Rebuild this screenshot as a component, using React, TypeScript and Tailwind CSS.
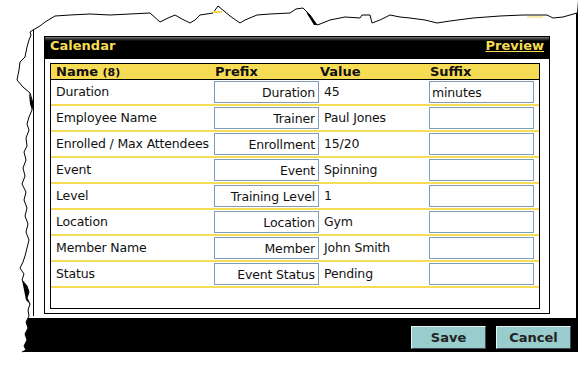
import React from 'react';

const rows = [
  ['Duration', 'Duration', '45', 'minutes'],
  ['Employee Name', 'Trainer', 'Paul Jones', ''],
  ['Enrolled / Max Attendees', 'Enrollment', '15/20', ''],
  ['Event', 'Event', 'Spinning', ''],
  ['Level', 'Training Level', '1', ''],
  ['Location', 'Location', 'Gym', ''],
  ['Member Name', 'Member', 'John Smith', ''],
  ['Status', 'Event Status', 'Pending', ''],
];

const topEdge: [number, number][] = [
  [577, 13], [563, 17], [553, 18], [547, 15], [523, 15], [500, 16], [473, 18], [450, 21], [437, 23],
  [425, 20], [410, 18], [400, 17], [390, 15], [380, 20], [372, 23], [370, 15], [362, 15], [360, 18],
  [345, 17], [330, 20], [320, 24], [317, 25], [310, 15], [303, 8], [296, 9], [290, 13], [270, 14],
  [257, 15], [245, 20], [240, 23], [230, 16], [218, 6], [213, 13], [200, 15], [195, 20], [190, 23],
  [182, 19], [175, 15], [168, 18], [160, 22], [150, 13], [130, 14], [110, 15], [90, 14], [70, 15],
  [55, 16], [45, 22], [40, 26], [33, 30], [30, 32],
];

const leftEdge: [number, number][] = [
  [31, 35], [29, 40], [27, 47], [25, 57], [20, 62], [19, 70], [17, 80], [23, 87], [30, 93], [33, 103],
  [32, 110], [29, 117], [27, 124], [29, 130], [26, 138], [27, 146], [24, 152], [26, 160], [23, 168],
  [25, 176], [22, 184], [26, 192], [24, 200], [27, 208], [25, 216], [28, 224], [26, 232], [29, 240],
  [27, 248], [25, 256], [23, 262], [20, 268], [24, 274], [22, 280], [27, 286], [29, 292], [27, 298],
  [30, 304], [28, 310], [29, 316], [26, 322], [28, 328], [25, 334], [27, 340], [24, 346], [26, 350],
  [22, 352],
];

function TornEdge() {
  const edge = [...topEdge, ...leftEdge];
  const line = edge.map(([x, y]) => `${x},${y}`).join(' ');
  const fill = `0,0 578,0 ${line} 0,352`;
  return (
    <svg className="absolute inset-0 pointer-events-none" width={587} height={369} viewBox="0 0 587 369">
      <polygon points={fill} fill="#fff" />
      <polyline points={line} fill="none" stroke="#000" strokeWidth={1} />
      <polygon points="29,93 33,103 32,110 30,104" fill="#000" />
      <polygon points="22,280 27,286 29,292 27,298 30,304 26,300 24,290" fill="#000" />
      <polygon points="310,15 317,25 314,25 306,12" fill="#000" />
      <line x1={213} y1={12} x2={222} y2={12} stroke="#f6dc55" strokeWidth={2} />
      <line x1={527} y1={17} x2={543} y2={17} stroke="#f6dc55" strokeWidth={1} />
    </svg>
  );
}

function Cell({ value, right }: { value: string; right?: boolean }) {
  return (
    <input
      readOnly
      value={value}
      className={`h-[22px] w-[105px] border border-[#7f9db9] bg-white text-[12.5px] tracking-[-0.15px] text-[#111] outline-none ${
        right ? 'pr-[3px] text-right' : 'pl-[2px]'
      }`}
    />
  );
}

export default function App() {
  return (
    <div className="relative w-[587px] h-[369px] overflow-hidden bg-white font-['DejaVu_Sans',Verdana,sans-serif] text-[12.5px] tracking-[-0.15px] text-[#111]">
      <div className="w-[578px] border-r-2 border-black">
        <div className="pl-[33px] pb-[2px]">
          <div className="border-l border-black pl-[10px] pt-[36px] pb-[2px]">
            <div className="w-[506px] h-[278px] border border-black">
              <div className="h-[22px] flex items-start justify-between px-[5px] pt-[1px] bg-[linear-gradient(#777,#000_4px)] font-bold text-[13px] tracking-normal text-[#f6dc55] leading-[15px]">
                <span>Calendar</span>
                <span className="underline">Preview</span>
              </div>
              <div className="pl-[5px] pt-[4px]">
                <div className="w-[490px] h-[246px] border border-black">
                  <div className="grid grid-cols-[162px_107px_109px_110px] h-[16px] bg-[#f6dc55] border-b border-black font-bold text-[13px] tracking-normal leading-[15px]">
                    <div className="pl-[5px]">
                      Name <span className="text-[11px]">(8)</span>
                    </div>
                    <div className="pl-[2px]">Prefix</div>
                    <div>Value</div>
                    <div className="pl-[1px]">Suffix</div>
                  </div>
                  {rows.map(([name, prefix, value, suffix]) => (
                    <div
                      key={name}
                      className="grid grid-cols-[162px_107px_109px_110px] h-[26px] border-b-2 border-[#f6dc55] items-center"
                    >
                      <div className="pl-[5px] whitespace-nowrap">{name}</div>
                      <div className="pl-[1px] flex">
                        <Cell value={prefix} right />
                      </div>
                      <div className="pl-[4px]">{value}</div>
                      <div className="flex">
                        <Cell value={suffix} />
                      </div>
                    </div>
                  ))}
                </div>
              </div>
            </div>
          </div>
        </div>
        <div className="h-[34px] bg-black flex justify-end items-start gap-[10px] pr-[5px] pt-[8px]">
          <button className="w-[75px] h-[23px] bg-[#99cccc] border border-t-[#e8f4f4] border-l-[#e8f4f4] border-r-[#445] border-b-[#445] font-bold text-[13px] tracking-normal text-[#222]">
            Save
          </button>
          <button className="w-[75px] h-[23px] bg-[#99cccc] border border-t-[#e8f4f4] border-l-[#e8f4f4] border-r-[#445] border-b-[#445] font-bold text-[13px] tracking-normal text-[#222]">
            Cancel
          </button>
        </div>
      </div>
      <TornEdge />
    </div>
  );
}
